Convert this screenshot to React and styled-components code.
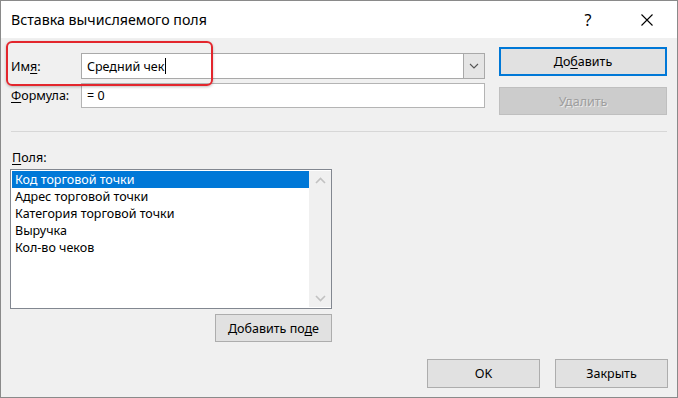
import styled, { createGlobalStyle } from "styled-components";

const Global = createGlobalStyle`
  html, body {
    margin: 0;
    padding: 0;
    background: #fff;
  }
  * {
    box-sizing: border-box;
  }
`;

const Window = styled.div`
  width: 678px;
  height: 398px;
  border: 1px solid #8a8a8a;
  display: flex;
  flex-direction: column;
  font-family: "Noto Sans", "Open Sans", sans-serif;
  font-size: 12.5px;
  color: #000;
  background: #f0f0f0;
`;

const TitleBar = styled.div`
  height: 37px;
  background: #fff;
  display: flex;
  align-items: center;
  padding-left: 10px;

  .title {
    font-size: 14.2px;
    flex: 1;
    margin-top: -1px;
  }
  .help {
    font-size: 16px;
    width: 20px;
    text-align: center;
    margin-right: 26px;
  }
  .close {
    width: 46px;
    display: flex;
    justify-content: center;
    margin-right: 7px;
  }
`;

const Body = styled.div`
  position: relative;
  flex: 1;
  padding: 0 9px 0 9px;
  display: flex;
  flex-direction: column;
`;

const Top = styled.div`
  display: flex;
  gap: 14px;
`;

const FieldsCol = styled.div`
  width: 475px;
  padding-top: 15px;
  display: flex;
  flex-direction: column;
  gap: 4px;
`;

const FieldRow = styled.div`
  display: flex;
  align-items: center;
  height: ${(p) => p.h}px;

  label {
    width: 71px;
    padding-left: 1px;
  }
`;

const Combo = styled.div`
  width: 404px;
  height: 100%;
  display: flex;
  border: 1px solid #a9a9a9;
  background: #fff;

  .text {
    flex: 1;
    padding-left: 5px;
    display: flex;
    align-items: center;
  }
  .caret {
    width: 1px;
    height: 16px;
    background: #000;
    margin-left: 1px;
  }
  .arrow {
    width: 21px;
    background: #e5e5e5;
    border-left: 1px solid #a9a9a9;
    display: flex;
    align-items: center;
    justify-content: center;
  }
`;

const TextInput = styled.div`
  width: 404px;
  height: 100%;
  border: 1px solid #b4b4b4;
  background: #fff;
  padding-left: 5px;
  display: flex;
  align-items: center;
`;

const ButtonsCol = styled.div`
  padding-top: 9px;
  display: flex;
  flex-direction: column;
  gap: 11px;
`;

const Button = styled.div`
  width: ${(p) => p.w}px;
  height: ${(p) => p.h || 28}px;
  display: flex;
  align-items: center;
  justify-content: center;
  background: ${(p) => (p.disabled ? "#cccccc" : "#e1e1e1")};
  border: ${(p) =>
    p.primary ? "2px solid #0078d7" : p.disabled ? "1px solid #bfbfbf" : "1px solid #adadad"};
  color: ${(p) => (p.disabled ? "#9e9e9e" : "#000")};
  text-shadow: ${(p) => (p.disabled ? "1px 1px 0 #e8e8e8" : "none")};
`;

const Separator = styled.div`
  height: 1px;
  background: #d7d7d7;
  margin: 16px 1px 0 1px;
`;

const FieldsLabel = styled.div`
  margin-top: 17px;
  padding-left: 2px;
  height: 20px;
  line-height: 18px;
`;

const ListArea = styled.div`
  width: 322px;
  display: flex;
  flex-direction: column;
  align-items: flex-end;
  gap: 5px;
`;

const ListBox = styled.div`
  width: 322px;
  height: 140px;
  border: 1px solid #828790;
  background: #fff;
  display: flex;
  padding: 1px 0 1px 1px;
`;

const Items = styled.div`
  flex: 1;
  display: flex;
  flex-direction: column;
`;

const Item = styled.div`
  height: 17px;
  line-height: 17px;
  padding-left: 3px;
  background: ${(p) => (p.selected ? "#0078d7" : "transparent")};
  color: ${(p) => (p.selected ? "#fff" : "#000")};
`;

const ScrollBar = styled.div`
  width: 22px;
  background: #f0f0f0;
  display: flex;
  flex-direction: column;
  justify-content: space-between;
  align-items: center;
  padding: 6px 0 5px;
`;

const Footer = styled.div`
  margin-top: auto;
  margin-bottom: 9px;
  display: flex;
  justify-content: flex-end;
  gap: 15px;
  padding-right: 0;
`;

const Highlight = styled.div`
  position: absolute;
  left: 5px;
  top: 3px;
  width: 207px;
  height: 45px;
  border: 2px solid #e3262d;
  border-radius: 6px;
  box-shadow: 0 1px 3px rgba(0, 0, 0, 0.25);
  pointer-events: none;
`;

const U = styled.span`
  text-decoration: underline;
  text-underline-offset: 2px;
`;

const Chevron = ({ up, color = "#c2c2c2" }) => (
  <svg width="11" height="7" viewBox="0 0 11 7">
    <path
      d={up ? "M1 6 L5.5 1.5 L10 6" : "M1 1 L5.5 5.5 L10 1"}
      fill="none"
      stroke={color}
      strokeWidth="1.6"
    />
  </svg>
);

const fields = [
  "Код торговой точки",
  "Адрес торговой точки",
  "Категория торговой точки",
  "Выручка",
  "Кол-во чеков",
];

const App = () => {
  return (
    <>
      <Global />
      <Window>
        <TitleBar>
          <div className="title">Вставка вычисляемого поля</div>
          <div className="help">?</div>
          <div className="close">
            <svg width="12" height="12" viewBox="0 0 12 12">
              <path d="M0.5 0.5 L11.5 11.5 M11.5 0.5 L0.5 11.5" stroke="#000" strokeWidth="1.1" />
            </svg>
          </div>
        </TitleBar>
        <Body>
          <Top>
            <FieldsCol>
              <FieldRow h={26}>
                <label>
                  Им<U>я</U>:
                </label>
                <Combo>
                  <div className="text">
                    Средний чек<span className="caret" />
                  </div>
                  <div className="arrow">
                    <svg width="10" height="6" viewBox="0 0 10 6">
                      <path d="M1 1 L5 5 L9 1" fill="none" stroke="#555" strokeWidth="1.1" />
                    </svg>
                  </div>
                </Combo>
              </FieldRow>
              <FieldRow h={25}>
                <label>
                  <U>Ф</U>ормула:
                </label>
                <TextInput>= 0</TextInput>
              </FieldRow>
            </FieldsCol>
            <ButtonsCol>
              <Button w={168} h={29} primary>
                <span>
                  До<U>б</U>авить
                </span>
              </Button>
              <Button w={168} disabled>
                Удалить
              </Button>
            </ButtonsCol>
          </Top>
          <Separator />
          <FieldsLabel>
            <U>П</U>оля:
          </FieldsLabel>
          <ListArea>
            <ListBox>
              <Items>
                {fields.map((f, i) => (
                  <Item key={f} selected={i === 0}>
                    {f}
                  </Item>
                ))}
              </Items>
              <ScrollBar>
                <Chevron up />
                <Chevron />
              </ScrollBar>
            </ListBox>
            <Button w={117} h={28}>
              <span>
                Добавить по<U>д</U>е
              </span>
            </Button>
          </ListArea>
          <Footer>
            <Button w={113} h={29}>
              OK
            </Button>
            <Button w={113} h={29}>
              Закрыть
            </Button>
          </Footer>
          <Highlight />
        </Body>
      </Window>
    </>
  );
};

export default App;
